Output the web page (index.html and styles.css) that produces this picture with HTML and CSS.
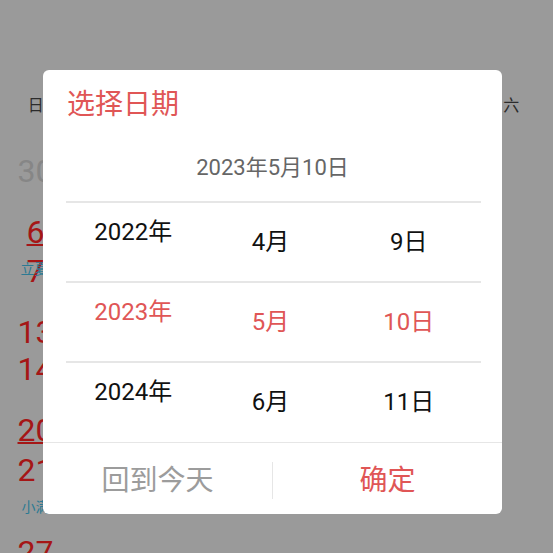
FILE: index.html
```html
<!DOCTYPE html>
<html lang="zh-CN">
<head>
<meta charset="utf-8">
<title>选择日期</title>
<link rel="stylesheet" href="styles.css">
</head>
<body>
<div class="screen">
  <div class="calendar">
    <div class="weekdays">
      <span>日</span><span>一</span><span>二</span><span>三</span><span>四</span><span>五</span><span>六</span>
    </div>
    <div class="first-col">
      <div class="num muted n30">30</div>
      <div class="num n6"><span class="ul">6</span></div>
      <div class="num n7">7</div>
      <div class="term t1">立夏</div>
      <div class="num n13">13</div>
      <div class="num n14">14</div>
      <div class="num n20"><span class="ul">20</span></div>
      <div class="num n21">21</div>
      <div class="term t2">小满</div>
      <div class="num n27">27</div>
    </div>
  </div>

  <div class="dialog">
    <div class="dialog-head">
      <div class="dialog-title">选择日期</div>
      <div class="dialog-sub">2023年5月10日</div>
    </div>
    <div class="picker">
      <div class="picker-row">
        <div class="cell year">2022年</div>
        <div class="cell">4月</div>
        <div class="cell">9日</div>
      </div>
      <div class="picker-row selected">
        <div class="cell year">2023年</div>
        <div class="cell">5月</div>
        <div class="cell">10日</div>
      </div>
      <div class="picker-row">
        <div class="cell year">2024年</div>
        <div class="cell">6月</div>
        <div class="cell">11日</div>
      </div>
    </div>
    <div class="dialog-foot">
      <div class="btn btn-today">回到今天</div>
      <div class="sep"></div>
      <div class="btn btn-ok">确定</div>
    </div>
  </div>
</div>
</body>
</html>
```
FILE: styles.css
```css
* { box-sizing: border-box; }
html, body {
  margin: 0;
  padding: 0;
  width: 553px;
  height: 553px;
  overflow: hidden;
  background: #9a9a9a;
  font-family: Roboto, "Noto Sans CJK SC", sans-serif;
}
.screen {
  position: relative;
  width: 553px;
  height: 553px;
  overflow: hidden;
}
.calendar {
  width: 555px;
  margin-left: -4px;
}
.weekdays {
  display: grid;
  grid-template-columns: repeat(7, 1fr);
  padding-top: 94px;
  height: 118px;
  font-size: 16px;
  line-height: 24px;
  color: #2c2c2c;
  text-align: center;
}
.first-col {
  width: 79px;
  display: flex;
  flex-direction: column;
  align-items: center;
}
.num {
  font-size: 32px;
  line-height: 32px;
  color: #a51616;
  height: 32px;
  white-space: nowrap;
}
.num.muted { color: #868686; }
.ul {
  text-decoration: underline;
  text-decoration-thickness: 2px;
  text-underline-offset: 1px;
}
.term {
  font-size: 14px;
  line-height: 16px;
  height: 16px;
  color: #2c7a93;
  white-space: nowrap;
}
.n30 { margin-top: 37px; }
.n6 { margin-top: 29px; }
.n7 { margin-top: 7px; }
.t1 { margin-top: -26px; margin-bottom: 10px; margin-right: 2px; }
.n13 { margin-top: 29px; }
.n14 { margin-top: 5px; }
.n20 { margin-top: 29px; }
.n21 { margin-top: 8px; }
.t2 { margin-top: 13px; }
.n27 { margin-top: 21px; }

.dialog {
  position: absolute;
  left: 43px;
  top: 70px;
  width: 459px;
  height: 444px;
  background: #fff;
  border-radius: 6px;
  display: flex;
  flex-direction: column;
}
.dialog-head {
  height: 131px;
  padding-top: 21px;
}
.dialog-title {
  padding-left: 24px;
  font-size: 28px;
  line-height: 28px;
  color: #e05656;
}
.dialog-sub {
  margin-top: 38px;
  text-align: center;
  font-size: 22px;
  line-height: 22px;
  color: #666;
}
.picker {
  margin: 0 21px 0 23px;
  height: 241px;
}
.picker-row {
  display: grid;
  grid-template-columns: 1fr 1fr 1fr;
  height: 80px;
  border-top: 2px solid #e6e6e6;
}
.cell {
  display: flex;
  align-items: center;
  justify-content: center;
  font-size: 24px;
  color: #111;
  padding-bottom: 6px;
  padding-right: 6px;
}
.cell.year { padding-bottom: 26px; padding-right: 4px; }
.picker-row.selected .cell { color: #e05656; }
.dialog-foot {
  flex: 1;
  border-top: 1px solid #e6e6e6;
  display: flex;
  align-items: center;
  padding-top: 4px;
}
.btn {
  flex: 1;
  text-align: center;
  font-size: 28px;
  line-height: 36px;
}
.btn-today { color: #9c9c9c; }
.btn-ok { color: #e05656; }
.sep {
  width: 1px;
  height: 37px;
  background: #e6e6e6;
}
```
